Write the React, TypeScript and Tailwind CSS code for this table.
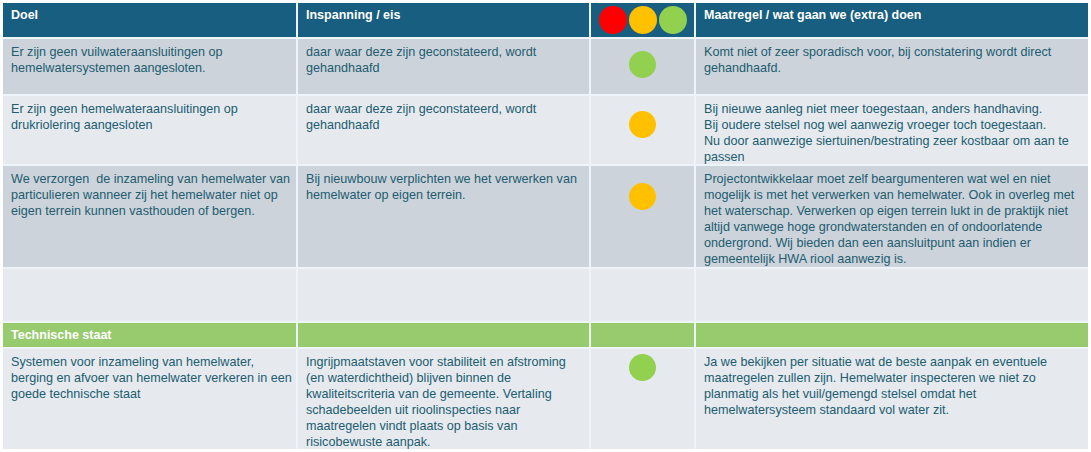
const font = { fontFamily: '"Liberation Sans", Arial, sans-serif' };

function Dot({ color }: { color: string }) {
  return <div className={`h-[27px] w-[27px] rounded-full ${color}`} />;
}

function Cell({ children, tone }: { children?: React.ReactNode; tone: string }) {
  return (
    <div className={`${tone} whitespace-nowrap px-[8px] pt-[5px] text-[12.6px] leading-[16px] text-[#215c70]`}>
      {children}
    </div>
  );
}

export default function App() {
  const dark = "bg-[#cdd3da]";
  const light = "bg-[#e6eaee]";
  const head = "bg-[#175e80] text-white font-bold text-[12.5px] leading-[16px] px-[8px] pt-[4px]";
  const green = "bg-[#97cb6e]";

  return (
    <div className="h-[452px] w-[1091px] bg-white pt-[3px] pl-[3px]" style={font}>
      <div className="grid w-[1085px] grid-cols-[293px_291px_103px_1fr] grid-rows-[34px_55px_68px_101px_52px_24px_100px] gap-[2px] bg-[#eef5fa]">
        <div className={head}>Doel</div>
        <div className={head}>Inspanning / eis</div>
        <div className="flex items-center justify-center gap-[2px] bg-[#175e80]">
          <div className="h-[28px] w-[28px] rounded-full bg-[#ff0000]" />
          <div className="h-[28px] w-[28px] rounded-full bg-[#ffc000]" />
          <div className="h-[28px] w-[28px] rounded-full bg-[#92d050]" />
        </div>
        <div className={head}>Maatregel / wat gaan we (extra) doen</div>

        <Cell tone={dark}>
          Er zijn geen vuilwateraansluitingen op
          <br />
          hemelwatersystemen aangesloten.
        </Cell>
        <Cell tone={dark}>
          daar waar deze zijn geconstateerd, wordt
          <br />
          gehandhaafd
        </Cell>
        <div className={`${dark} flex justify-center pt-[12px]`}>
          <Dot color="bg-[#92d050]" />
        </div>
        <Cell tone={dark}>
          Komt niet of zeer sporadisch voor, bij constatering wordt direct
          <br />
          gehandhaafd.
        </Cell>

        <Cell tone={light}>
          Er zijn geen hemelwateraansluitingen op
          <br />
          drukriolering aangesloten
        </Cell>
        <Cell tone={light}>
          daar waar deze zijn geconstateerd, wordt
          <br />
          gehandhaafd
        </Cell>
        <div className={`${light} flex justify-center pt-[15px]`}>
          <Dot color="bg-[#ffc000]" />
        </div>
        <Cell tone={light}>
          Bij nieuwe aanleg niet meer toegestaan, anders handhaving.
          <br />
          Bij oudere stelsel nog wel aanwezig vroeger toch toegestaan.
          <br />
          Nu door aanwezige siertuinen/bestrating zeer kostbaar om aan te
          <br />
          passen
        </Cell>

        <Cell tone={dark}>
          We verzorgen&nbsp; de inzameling van hemelwater van
          <br />
          particulieren wanneer zij het hemelwater niet op
          <br />
          eigen terrein kunnen vasthouden of bergen.
        </Cell>
        <Cell tone={dark}>
          Bij nieuwbouw verplichten we het verwerken van
          <br />
          hemelwater op eigen terrein.
        </Cell>
        <div className={`${dark} flex justify-center pt-[17px]`}>
          <Dot color="bg-[#ffc000]" />
        </div>
        <Cell tone={dark}>
          Projectontwikkelaar moet zelf beargumenteren wat wel en niet
          <br />
          mogelijk is met het verwerken van hemelwater. Ook in overleg met
          <br />
          het waterschap. Verwerken op eigen terrein lukt in de praktijk niet
          <br />
          altijd vanwege hoge grondwaterstanden en of ondoorlatende
          <br />
          ondergrond. Wij bieden dan een aansluitpunt aan indien er
          <br />
          gemeentelijk HWA riool aanwezig is.
        </Cell>

        <div className={light} />
        <div className={light} />
        <div className={light} />
        <div className={light} />

        <div className={`${green} px-[8px] pt-[4px] text-[12.5px] font-bold leading-[16px] text-white`}>Technische staat</div>
        <div className={green} />
        <div className={green} />
        <div className={green} />

        <Cell tone={light}>
          Systemen voor inzameling van hemelwater,
          <br />
          berging en afvoer van hemelwater verkeren in een
          <br />
          goede technische staat
        </Cell>
        <Cell tone={light}>
          Ingrijpmaatstaven voor stabiliteit en afstroming
          <br />
          (en waterdichtheid) blijven binnen de
          <br />
          kwaliteitscriteria van de gemeente. Vertaling
          <br />
          schadebeelden uit rioolinspecties naar
          <br />
          maatregelen vindt plaats op basis van
          <br />
          risicobewuste aanpak.
        </Cell>
        <div className={`${light} flex justify-center pt-[5px]`}>
          <Dot color="bg-[#92d050]" />
        </div>
        <Cell tone={light}>
          Ja we bekijken per situatie wat de beste aanpak en eventuele
          <br />
          maatregelen zullen zijn. Hemelwater inspecteren we niet zo
          <br />
          planmatig als het vuil/gemengd stelsel omdat het
          <br />
          hemelwatersysteem standaard vol water zit.
        </Cell>
      </div>
    </div>
  );
}
